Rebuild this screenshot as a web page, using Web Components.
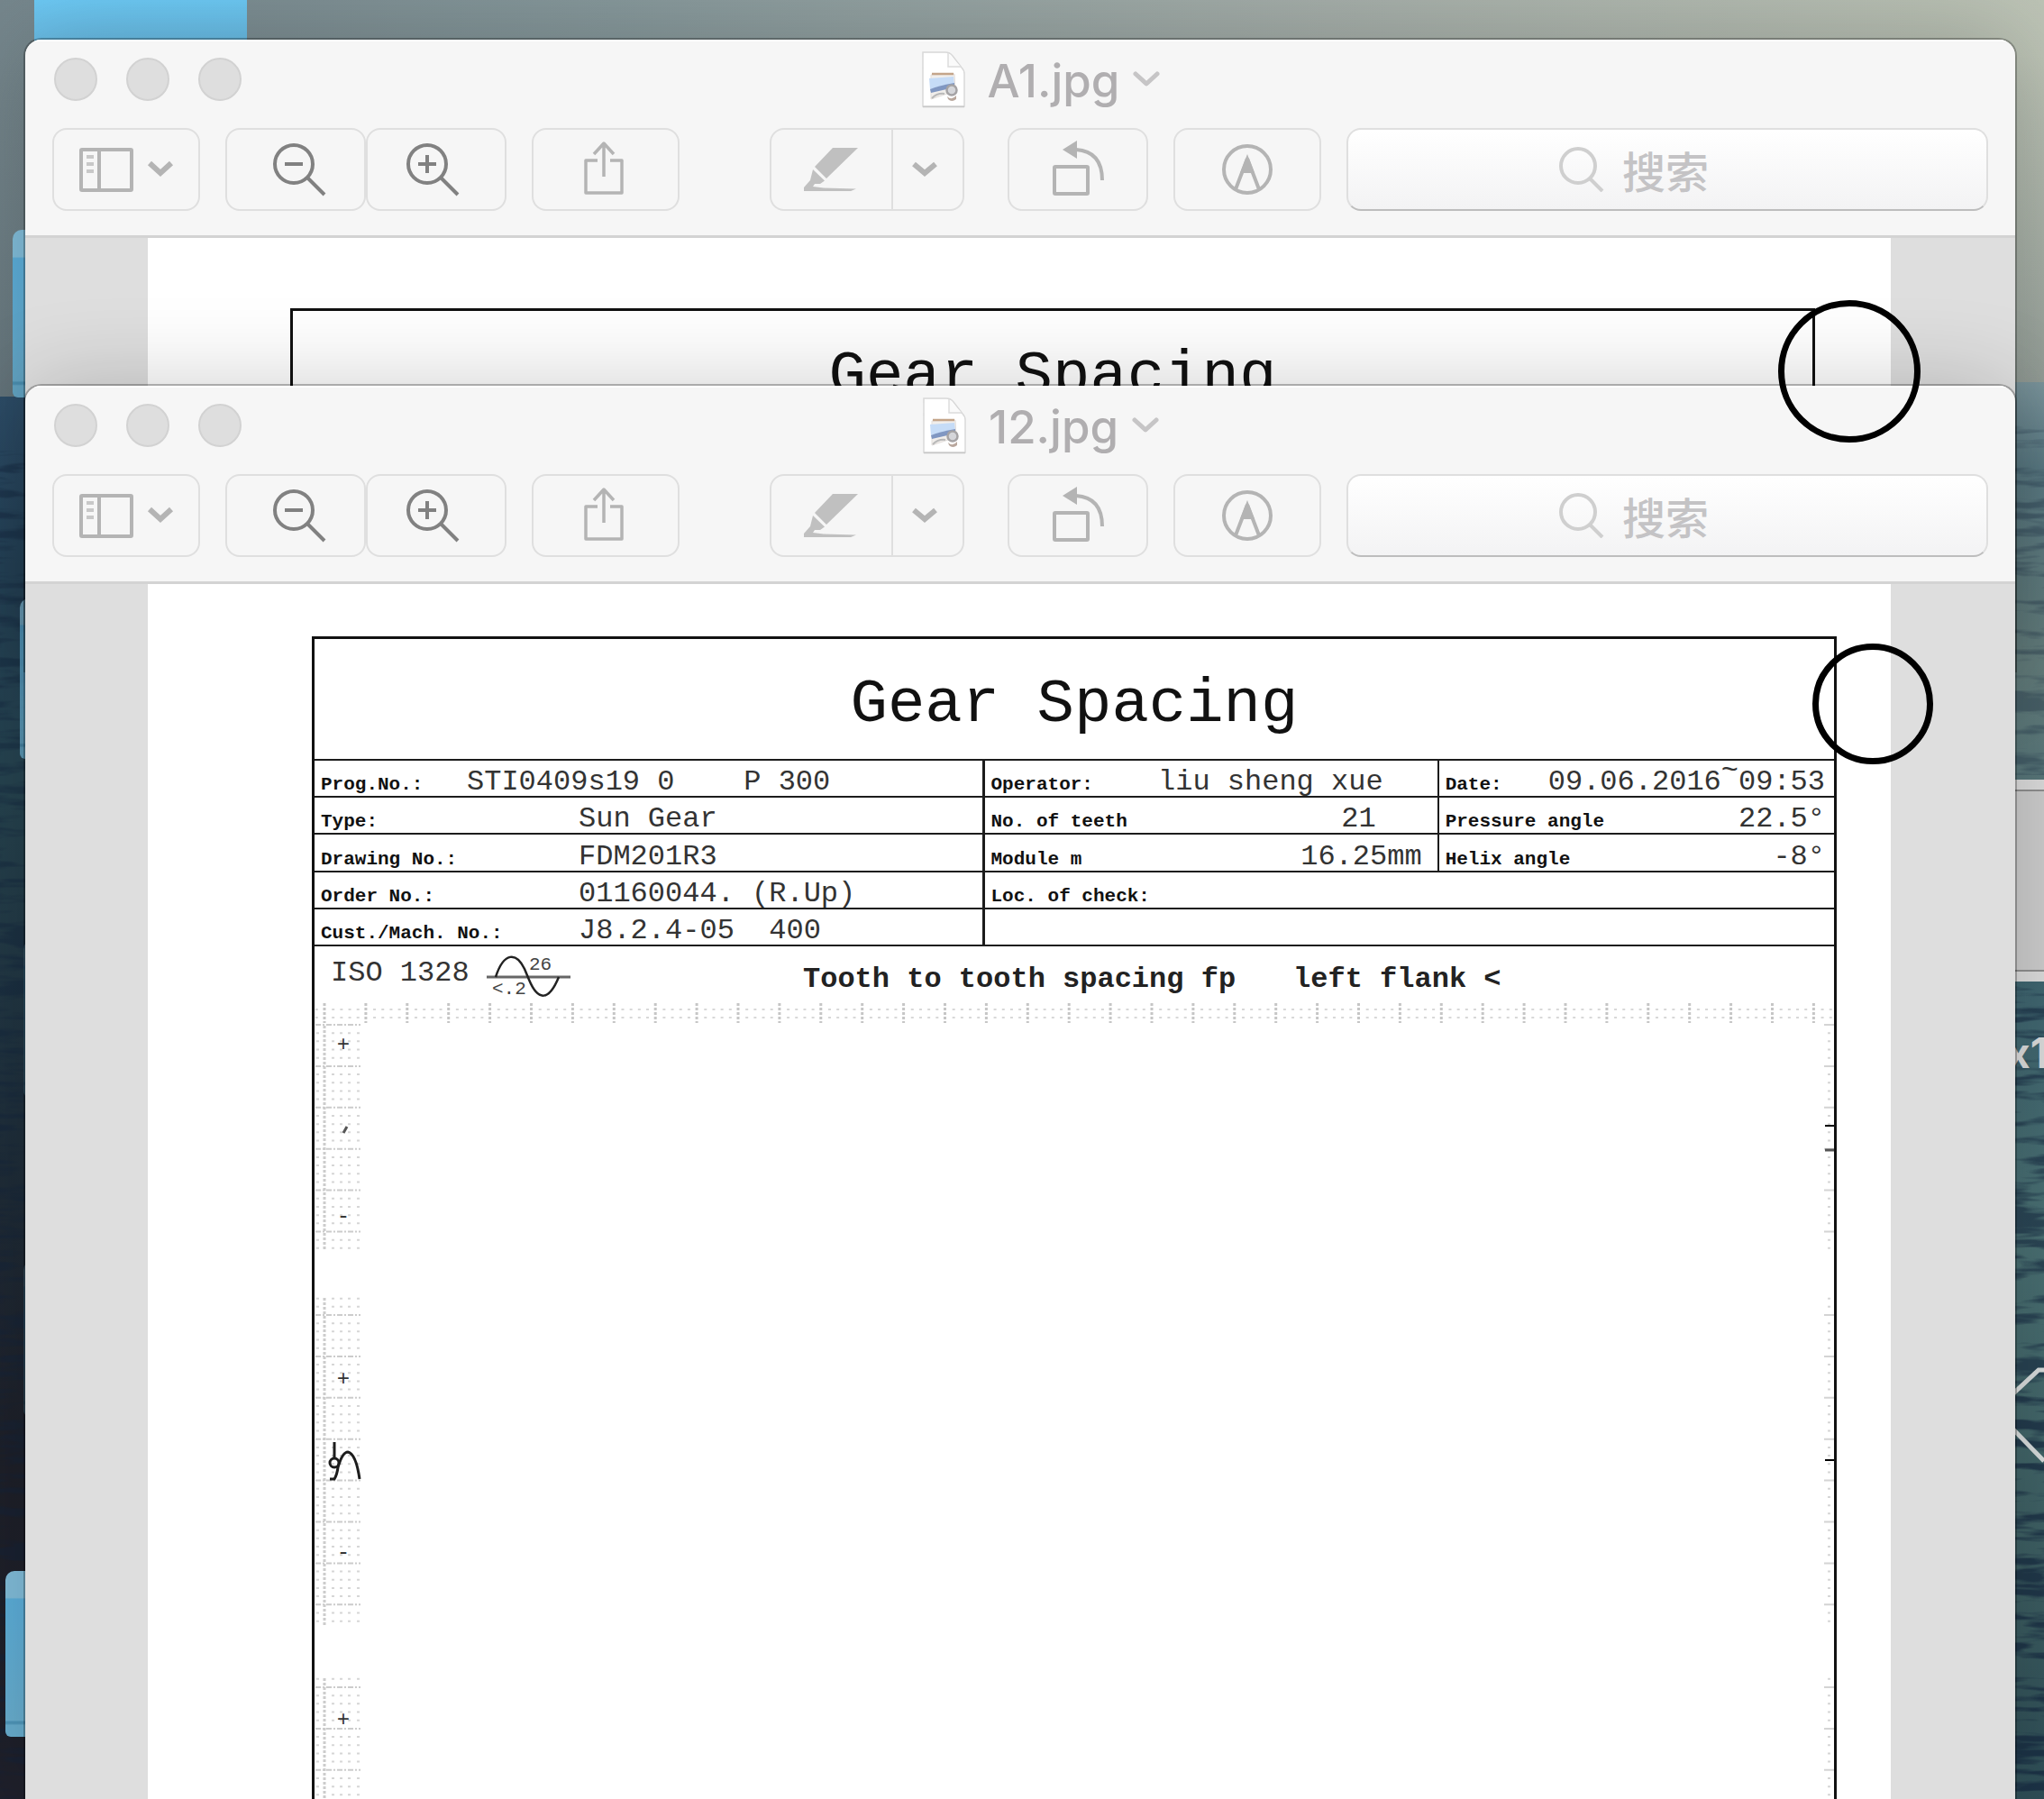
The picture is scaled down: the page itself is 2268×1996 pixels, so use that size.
<!DOCTYPE html>
<html lang="zh-CN">
<head>
<meta charset="utf-8">
<title>Preview</title>
<style>
html, body { margin: 0; height: 100%; }
body { font-family: Inter, "Noto Sans CJK SC", sans-serif; overflow: hidden; }
</style>
</head>
<body>
<desk-top>
  <preview-window class="back" name="A1.jpg"><gear-sheet class="shifted"></gear-sheet></preview-window>
  <preview-window class="front" name="12.jpg"><gear-sheet full></gear-sheet></preview-window>
  <ring-mark class="one"></ring-mark>
  <ring-mark class="two"></ring-mark>
</desk-top>
<script>
const define = (name, html) => customElements.define(name, class extends HTMLElement {
  constructor() {
    super();
    this.attachShadow({ mode: 'open' });
  }
  connectedCallback() {
    this.shadowRoot.innerHTML = typeof html === 'function' ? html(this) : html;
  }
});

/* Wallpaper: sky over sea */
define('desk-wallpaper', `
<style>
  :host { display: block; position: absolute; inset: 0; }
  svg { display: block; width: 100%; height: 100%; }
</style>
<svg viewBox="0 0 2268 1996" preserveAspectRatio="none" aria-hidden="true">
  <defs>
    <linearGradient id="sky"><stop offset="0" stop-color="#75868c"/><stop offset=".3" stop-color="#86989b"/><stop offset=".65" stop-color="#a5aea9"/><stop offset="1" stop-color="#bcc3b5"/></linearGradient>
    <linearGradient id="dusk" x2="0" y2="1"><stop offset="0" stop-color="#506068" stop-opacity="0"/><stop offset="1" stop-color="#506068" stop-opacity=".35"/></linearGradient>
    <linearGradient id="left" x2="0" y2="1"><stop offset="0" stop-color="#2f506c"/><stop offset=".12" stop-color="#26445a"/><stop offset=".28" stop-color="#26434f"/><stop offset=".5" stop-color="#1f303d"/><stop offset=".75" stop-color="#1e2029"/><stop offset="1" stop-color="#1f202b"/></linearGradient>
    <linearGradient id="right" x2="0" y2="1"><stop offset="0" stop-color="#7f9aa2"/><stop offset=".06" stop-color="#5d7e88"/><stop offset=".2" stop-color="#66807f"/><stop offset=".42" stop-color="#3f6570"/><stop offset=".6" stop-color="#4a7073"/><stop offset=".85" stop-color="#3c5d61"/><stop offset="1" stop-color="#2e4d56"/></linearGradient>
    <filter id="waves" x="0" y="0" width="100%" height="100%" color-interpolation-filters="sRGB">
      <feTurbulence type="fractalNoise" baseFrequency=".014 .085" numOctaves="3" seed="11"/>
      <feColorMatrix values="0 0 0 0 .07  0 0 0 0 .14  0 0 0 0 .24  5 0 0 0 -2.3"/>
    </filter>
  </defs>
  <rect width="2268" height="440" fill="url(#sky)"/>
  <rect y="60" width="2268" height="380" fill="url(#dusk)"/>
  <rect y="440" width="200" height="1556" fill="url(#left)"/>
  <rect x="2100" y="424" width="168" height="1572" fill="url(#right)"/>
  <rect y="500" width="60" height="1496" filter="url(#waves)" opacity=".4"/>
  <rect x="2200" y="470" width="68" height="390" filter="url(#waves)" opacity=".3"/>
  <rect x="2200" y="1080" width="68" height="460" filter="url(#waves)" opacity=".55"/>
  <rect x="2200" y="1540" width="68" height="456" filter="url(#waves)" opacity=".65"/>
</svg>`);

define('folder-icon', `
<style>
  :host { display: block; border-radius: 10px 0 0 6px; background: linear-gradient(#82bedb 0 16%, #5cafdb 17%, #69afd0 90%, #4f97bb 91% 92%, #69afd0 93%); }
</style>`);

define('desk-top', `
<style>
  :host { display: block; position: relative; height: 100vh; min-height: 600px; overflow: hidden; background: #3c5560; }
  .item { position: absolute; }
  .banner { left: 38px; top: 0; width: 236px; height: 60px; background: linear-gradient(#6cc8f3, #68b8e0); }
  .f1 { left: 14px; top: 255px; width: 40px; height: 186px; }
  .f2 { left: 22px; top: 664px; width: 40px; height: 178px; opacity: .75; }
  .f3 { left: 26px; top: 1043px; width: 40px; height: 174px; opacity: .3; }
  .f4 { left: 26px; top: 1399px; width: 40px; height: 172px; opacity: .3; }
  .f5 { left: 6px; top: 1743px; width: 40px; height: 184px; }
  .panel { right: 0; top: 865px; width: 60px; height: 202px; border: solid #dcdcdc; border-width: 11px 0; background: #cdcdcd; box-shadow: inset 0 2px #8f8f8f, inset 0 -2px #8f8f8f; }
  .caption { left: 2226px; top: 1140px; font: 700 46px/56px Inter, sans-serif; color: #dcdcdc; white-space: nowrap; }
  .lines { right: 0; top: 1500px; width: 36px; height: 140px; }
  ::slotted(.back) { position: absolute; left: 28px; right: 32px; top: 44px; height: 700px; }
  ::slotted(.front) { position: absolute; left: 28px; right: 32px; top: 428px; bottom: 0; }
  ::slotted(.one) { position: absolute; left: 1973px; top: 333px; width: 158px; height: 158px; }
  ::slotted(.two) { position: absolute; left: 2011px; top: 714px; width: 134px; height: 134px; }
</style>
<desk-wallpaper></desk-wallpaper>
<div class="item banner"></div>
<folder-icon class="item f1"></folder-icon>
<folder-icon class="item f2"></folder-icon>
<folder-icon class="item f3"></folder-icon>
<folder-icon class="item f4"></folder-icon>
<folder-icon class="item f5"></folder-icon>
<div class="item panel"></div>
<div class="item caption">x1</div>
<svg class="item lines" viewBox="0 0 36 140" fill="none" stroke="#d8dcdc" stroke-width="5" aria-hidden="true"><path d="M0 48 30 20H36M0 84 36 121"/></svg>
<slot></slot>`);

define('ring-mark', `
<style>:host { display: block; box-sizing: border-box; border: 7px solid #000; border-radius: 50%; }</style>`);

define('title-bar', el => `
<style>
  :host { display: grid; grid-template-columns: 1fr auto 1fr; column-gap: 14px; align-items: center; height: 88px; padding: 0 32px; }
  .lights { display: flex; gap: 32px; }
  .lights button { width: 48px; height: 48px; padding: 0; border: 2px solid #d2d2d2; border-radius: 50%; background: #dedede; }
  .name { display: flex; align-items: center; gap: 24px; font-size: 51px; line-height: 64px; color: #b0aeb0; }
  h1 { margin: 0; padding-top: 4px; font: inherit; font-weight: 500; }
  svg { display: block; }
  .more { padding: 0; border: 0; background: none; justify-self: start; }
</style>
<div class="lights"><button aria-label="Close"></button><button aria-label="Minimize"></button><button aria-label="Zoom"></button></div>
<div class="name">
  <svg width="50" height="64" viewBox="0 0 50 64" aria-hidden="true">
    <path d="M2 2H27Q32 2 35 6L45 19Q48 22 48 26V62H2Z" fill="#fff" stroke="#d8d8d8" stroke-width="1.5"/>
    <path d="M2 62.500H48" stroke="#c8c8c8" stroke-width="1.500"/>
    <path d="M30 3V18H44" fill="#fafafa" stroke="#dcdcdc" stroke-width="1.500"/>
    <path d="M11 27 37 26 38 45 11 54Z" fill="#f1eeeb" stroke="#e3dedb"/>
    <path d="M12 26 36 26" stroke="#c4a58a" stroke-width="2.500"/>
    <path d="M9 31 36 29 37 38 10 43Z" fill="#c6dcf7"/>
    <path d="M10 43Q20 39 37 36V41L11 47Z" fill="#8097c2"/>
    <path d="M12 53Q18 47 26 48" stroke="#b9b9b9" stroke-width="2" fill="none"/>
    <circle cx="34" cy="44" r="5.500" fill="#d5d6da" stroke="#a5a3a5" stroke-width="2.500"/>
    <path d="M29 51Q34 56 39 50V54Q34 58 30 54Z" fill="#b9a79d"/>
  </svg>
  <h1>${el.getAttribute('name')}</h1>
</div>
<button class="more" aria-label="Rename"><svg width="32" height="20" viewBox="0 0 32 20" fill="none" stroke="#c6c5c6" stroke-width="5" stroke-linecap="round" stroke-linejoin="round"><path d="M4 4 16 15 28 4"/></svg></button>`);

define('tool-bar', `
<style>
  :host { display: flex; height: 92px; padding: 0 30px 27px; border-bottom: 3px solid #d3d3d3; gap: 28px; }
  button { box-sizing: border-box; height: 92px; width: 156px; padding: 0; border: 2px solid #dfdfdf; border-radius: 16px; background: #f6f6f6; }
  .wide { width: 164px; }
  .pair, .split { display: flex; }
  .split { margin: 0 20px 0 72px; }
  .split button { width: 137px; border-radius: 16px 0 0 16px; }
  .split .drop { width: 81px; margin-left: -2px; border-radius: 0 16px 16px 0; }
  svg { display: block; margin: -2px; fill: none; stroke: #b4b4b4; stroke-width: 4; }
  .dark { stroke: #818181; }
  .solid { fill: #c0c0c0; stroke: none; }
  label { box-sizing: border-box; flex: 1; min-width: 0; height: 92px; display: flex; align-items: center; justify-content: center; gap: 20px; border: 2px solid #dfdfdf; border-bottom-color: #bdbdbd; border-radius: 16px; background: linear-gradient(#fff, #f3f3f4); }
  label svg { margin: 0; stroke: #cfcfcf; }
  input { width: 170px; height: 72px; padding: 0; border: 0; outline: 0; background: none; font: 500 48px/72px "Noto Sans CJK SC", sans-serif; appearance: none; }
  input::placeholder { color: #c4c3c5; opacity: 1; }
</style>
<button class="wide" aria-label="Sidebar"><svg width="164" height="92" viewBox="0 0 164 92"><rect x="32" y="24" width="56" height="45" rx="1"/><path d="M52 24V69"/><path d="M38 32H46M38 40H46M38 48H46" stroke="#c8c8c8"/><path d="M108 39 120 50 132 39" stroke-width="6"/></svg></button>
<div class="pair">
  <button aria-label="Zoom out"><svg class="dark" width="156" height="92" viewBox="0 0 156 92"><circle cx="76" cy="40" r="21"/><path d="M66 40H86M91 55 110 74"/></svg></button>
  <button aria-label="Zoom in"><svg class="dark" width="156" height="92" viewBox="0 0 156 92"><circle cx="68" cy="40" r="21"/><path d="M58 40H78M68 30V50M83 55 102 74"/></svg></button>
</div>
<button class="wide" aria-label="Share"><svg width="164" height="92" viewBox="0 0 164 92" stroke-linejoin="round"><path d="M73 36H60V72H100V36H87M80 54V17M69 29 80 17 91 29" stroke-width="3.500"/></svg></button>
<div class="split">
  <button aria-label="Highlight"><svg class="solid" width="137" height="92" viewBox="0 0 137 92"><path d="M70 22H98L63 56 50 43ZM48 46 61 58.500 56 62H50L48 65 60 66.500 96 67.500 90 70H38V66L45 58Z"/></svg></button>
  <button class="drop" aria-label="Highlight colour"><svg width="81" height="92" viewBox="0 0 81 92" stroke="#c0c0c0"><path d="M25 40 37 50 49 40" stroke-width="6"/></svg></button>
</div>
<button aria-label="Rotate"><svg width="156" height="92" viewBox="0 0 156 92"><rect x="52" y="43" width="37" height="30" rx="1"/><path d="M76 24Q105 26 105 58"/><path d="M61 24 77 14V34Z" fill="#b4b4b4" stroke="none"/></svg></button>
<button class="wide" aria-label="Markup"><svg width="164" height="92" viewBox="0 0 164 92"><circle cx="82" cy="46" r="26"/><path d="M82 34 69 68M82 34 95 68"/><path d="M82 29 90 50H74Z" fill="#b4b4b4" stroke="none"/></svg></button>
<label><svg width="50" height="50" viewBox="0 0 50 50" aria-hidden="true"><circle cx="21" cy="21" r="19"/><path d="M34 35 48 49"/></svg><input type="search" placeholder="搜索" aria-label="搜索"></label>`);

define('preview-window', el => `
<style>
  :host { display: flex; flex-direction: column; border-radius: 18px 18px 0 0; overflow: hidden; background: #dedede; box-shadow: 0 0 0 2px rgba(0,0,0,.26), 0 0 100px rgba(0,0,0,.2); }
  header { display: flex; flex-direction: column; gap: 10px; background: #f6f6f6; box-shadow: inset 0 2px #fff; flex: none; }
  main { flex: 1; min-height: 0; overflow: hidden; padding: 0 138px 0 136px; }
</style>
<header><title-bar name="${el.getAttribute('name')}"></title-bar><tool-bar></tool-bar></header>
<main><slot></slot></main>`);

/* Scale strips: y is measured from the lower edge of the top ruler */
const strips = [[-8, 250, 1], [304, 668, 323], [726, 866, 736]];
const steps = (from, to, origin, size) => {
  const out = [];
  for (let y = origin - Math.floor((origin - from) / size) * size; y <= to; y += size) out.push(y);
  return out;
};
const isMajor = (y, origin) => Math.abs((y - origin) / 45.9 - Math.round((y - origin) / 45.9)) < .05;

define('top-ruler', () => {
  let dots = '', ticks = '';
  for (let i = -1; i < 183; i++) {
    const x = 11 + i * 9.18;
    if (i % 5 === 0) ticks += `M${x} 1V23`;
    else dots += `M${x - 1} 8h3M${x - 1} 17h3`;
  }
  return `<style>:host, svg { display: block; } svg { width: 100%; height: 24px; }</style>
  <svg viewBox="0 0 1686 24" preserveAspectRatio="none" fill="none" aria-hidden="true"><path d="${dots}" stroke="#d8d8d8" stroke-width="2"/><path d="${ticks}" stroke="#c6c6c6" stroke-width="3" stroke-dasharray="3 2"/></svg>`;
});

define('left-scale', () => {
  let dots = '', rows = '', cols = '';
  for (const [a, b, o] of strips) {
    cols += `M11 ${a}V${b}`;
    for (const y of steps(a, b, o, 9.18)) {
      if (isMajor(y, o)) rows += `M1 ${y}H51`;
      else for (const x of [2, 19, 28, 37, 47]) dots += `M${x} ${y}h3`;
    }
  }
  return `<style>:host, svg { display: block; } text { font: 24px "Liberation Mono", monospace; fill: #333; text-anchor: middle; }</style>
  <svg width="54" height="866" viewBox="0 0 54 866" fill="none">
    <path d="${dots}" stroke="#d6d6d6" stroke-width="2"/>
    <path d="${rows}" stroke="#cccccc" stroke-width="2" stroke-dasharray="6 2 2 2"/>
    <path d="${cols}" stroke="#cccccc" stroke-width="3" stroke-dasharray="3 2"/>
    <text x="32" y="30">+</text><path d="M36 114 32 121" stroke="#555" stroke-width="3"/><text x="32" y="220">-</text>
    <text x="32" y="401">+</text><text x="32" y="593">-</text><text x="32" y="779">+</text>
    <g stroke="#1c1c1c" stroke-width="3"><path d="M22 464V483M17 505H22Q25 500 26 492Q31 475 37 475Q46 477 50 505"/><circle cx="22" cy="487" r="5"/></g>
  </svg>`;
});

define('right-scale', () => {
  let dots = '', rows = '';
  for (const [a, b, o] of strips)
    for (const y of steps(Math.max(a, 0), b, o, 9.18))
      if (isMajor(y, o)) rows += `M2 ${y}H13`; else dots += `M6 ${y}h3`;
  return `<style>:host, svg { display: block; }</style>
  <svg width="13" height="866" viewBox="0 0 13 866" fill="none" aria-hidden="true">
    <path d="${dots}" stroke="#d6d6d6" stroke-width="2"/><path d="${rows}" stroke="#d4d4d4" stroke-width="2"/>
    <path d="M3 113H13M3 484H13" stroke="#000" stroke-width="2"/><path d="M3 140H13" stroke="#555" stroke-width="3"/>
  </svg>`;
});

define('gear-table', `
<style>
  :host { display: block; }
  table { width: 100%; height: 206px; table-layout: fixed; border-collapse: separate; border-spacing: 0; }
  td { padding: 0 0 0 7px; border-bottom: 2px solid #1c1c1c; vertical-align: bottom; height: 39px; }
  tr > td:first-child { border-right: 3px solid #1c1c1c; }
  .mid { border-right: 2px solid #1c1c1c; }
  .c1 { width: 44.1%; } .c2 { width: 29.9%; } .c3 { width: 26%; }
  td div { display: flex; align-items: baseline; line-height: 30px; height: 30px; font-size: 32px; white-space: pre; color: #333; }
  b { font-size: 21px; width: 286px; flex: none; color: #111; }
  .near b { width: 162px; }
  .end { justify-content: space-between; padding-right: 10px; }
  .end b { width: auto; }
  .mid .end { padding-right: 17px; }
  .mid .in { padding-right: 60px; }
  .mid .far { padding-right: 68px; }
  sup { font-size: 32px; line-height: 0; vertical-align: super; }
</style>
<table>
  <colgroup><col class="c1"><col class="c2"><col class="c3"></colgroup>
  <tr><td><div class="near"><b>Prog.No.:</b><span>STI0409s19 0    P 300</span></div></td><td class="mid"><div class="end in"><b>Operator:</b><span>liu sheng xue</span></div></td><td><div class="end"><b>Date:</b><span>09.06.2016<sup>~</sup>09:53</span></div></td></tr>
  <tr><td><div><b>Type:</b><span>Sun Gear</span></div></td><td class="mid"><div class="end far"><b>No. of teeth</b><span>21</span></div></td><td><div class="end"><b>Pressure angle</b><span>22.5°</span></div></td></tr>
  <tr><td><div><b>Drawing No.:</b><span>FDM201R3</span></div></td><td class="mid"><div class="end"><b>Module m</b><span>16.25mm</span></div></td><td><div class="end"><b>Helix angle</b><span>-8°</span></div></td></tr>
  <tr><td><div><b>Order No.:</b><span>01160044. (R.Up)</span></div></td><td colspan="2"><div><b>Loc. of check:</b><span>&nbsp;</span></div></td></tr>
  <tr><td><div><b>Cust./Mach. No.:</b><span>J8.2.4-05  400</span></div></td><td colspan="2"></td></tr>
</table>`);

define('gear-sheet', el => `
<style>
  :host { display: block; min-height: 100%; background: #fff; padding: 58px 60px 0 182px; box-sizing: border-box; font-family: "Liberation Mono", monospace; color: #111; }
  :host(.shifted) { padding: 78px 84px 0 158px; }
  .frame { border: 3px solid #111; border-bottom: 0; min-height: 1290px; }
  h2 { margin: 0; height: 133px; border-bottom: 2px solid #1c1c1c; font-weight: 400; font-size: 69px; line-height: 146px; text-align: center; }
  .note { display: flex; align-items: flex-start; height: 62px; font-size: 32px; line-height: 32px; white-space: pre; }
  .iso { display: flex; flex: 0 0 524px; gap: 18px; padding: 14px 0 0 18px; color: #333; }
  .iso svg { margin-top: -7px; }
  .iso text { font-size: 21px; fill: #444; }
  h3 { margin: 0; padding-top: 21px; display: flex; gap: 64px; font-size: 32px; line-height: 32px; font-weight: 700; color: #222; }
  .plot { display: flex; justify-content: space-between; }
</style>
<section class="frame">
  <h2>Gear Spacing</h2>
  ${el.hasAttribute('full') ? `
  <gear-table></gear-table>
  <div class="note">
    <div class="iso"><span>ISO 1328</span>
      <svg width="96" height="52" viewBox="0 0 96 52" fill="none"><path d="M1 27H94" stroke="#666" stroke-width="3"/><path d="M11 27C20 -1 34 -1 43 18L48 30C58 54 70 54 81 27" stroke="#222" stroke-width="2.500"/><text x="48" y="19">26</text><text x="7" y="46">&lt;.2</text></svg>
    </div>
    <h3><span>Tooth to tooth spacing fp</span><span>left flank &lt;</span></h3>
  </div>
  <top-ruler></top-ruler>
  <div class="plot"><left-scale></left-scale><right-scale></right-scale></div>` : ''}
</section>`);
</script>
</body>
</html>
